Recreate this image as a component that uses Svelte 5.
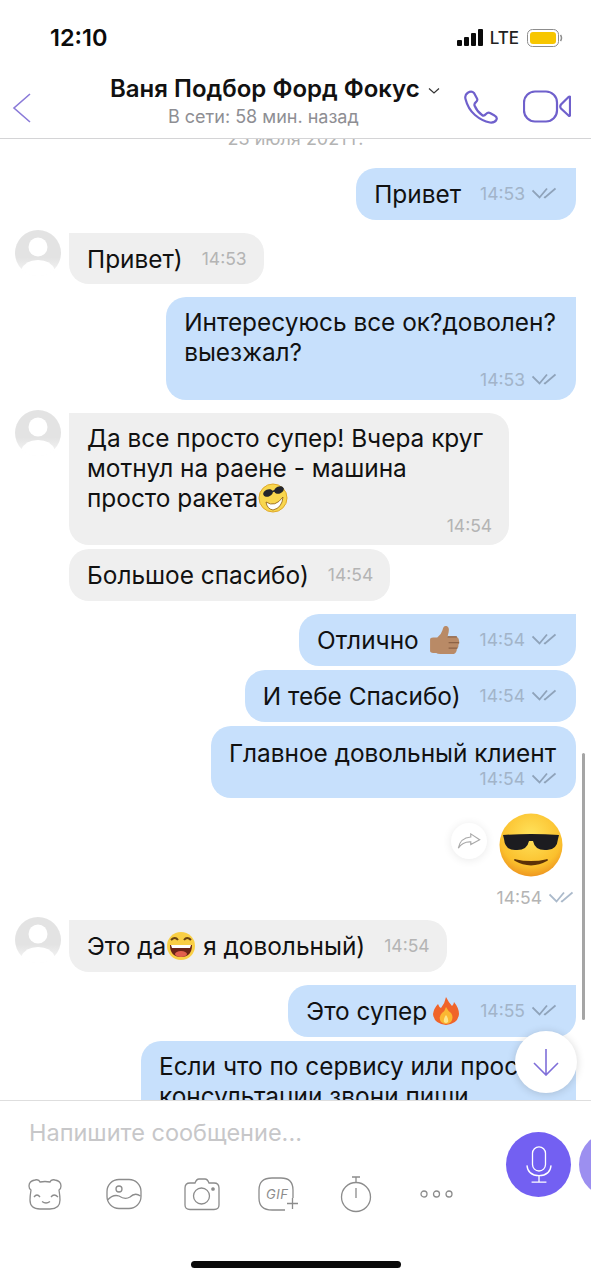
<script>
  const messages = [
    { side: "out", lines: ["Привет"], time: "14:53", corner: true },
    { side: "in", lines: ["Привет)"], time: "14:53", avatar: true, short: true },
    { side: "out", lines: ["Интересуюсь все ок?доволен?", "выезжал?"], time: "14:53", corner: true },
    { side: "in", lines: ["Да все просто супер! Вчера круг", "мотнул на раене - машина", "просто ракета"], time: "14:54", avatar: true, emoji: "cool", roomy: true },
    { side: "in", lines: ["Большое спасибо)"], time: "14:54", tight: true },
    { side: "out", lines: ["Отлично "], time: "14:54", corner: true, emoji: "thumb" },
    { side: "out", lines: ["И тебе Спасибо)"], time: "14:54", tight: true },
    { side: "out", lines: ["Главное довольный клиент"], time: "14:54", tight: true, stacked: true },
    { side: "sticker", time: "14:54" },
    { side: "in", lines: ["Это да"], after: " я довольный)", time: "14:54", avatar: true, emoji: "laugh" },
    { side: "out", lines: ["Это супер"], time: "14:55", corner: true, emoji: "fire" },
  ];
</script>

{#snippet checks()}
  <svg class="checks" viewBox="0 0 24 14" fill="none" stroke="#8fa3ba" stroke-width="1.800">
    <path d="M.5 3.500 L7.500 10.500 L15 1.500" />
    <path d="M12 10 L13 10.500 L23.500 1.500" />
  </svg>
{/snippet}

{#snippet emojiIcon(name)}
  {#if name === "cool"}
    <svg class="emoji" viewBox="0 0 30 30">
      <circle cx="15" cy="15" r="14" fill="#f8d64e" stroke="#e0a92a" />
      <path d="M8 19 Q17 25 25 14 Q24 25 15 27 Q9 26 8 19Z" fill="#fff" stroke="#8a5a10" stroke-width=".8" />
      <ellipse cx="10" cy="10" rx="5" ry="3.600" transform="rotate(-22 10 10)" fill="#23252c" />
      <ellipse cx="21" cy="7" rx="5" ry="3.600" transform="rotate(-22 21 7)" fill="#23252c" />
      <path d="M13 9 L19 7" stroke="#23252c" stroke-width="1.600" />
    </svg>
  {:else if name === "thumb"}
    <svg class="emoji thumb" viewBox="0 0 32 32">
      <path d="M2 15 Q2 13 5 13 H9 Q13 10 14 6 Q15 1 18 2 Q21 3 20 8 L19 12 H27 Q30 13 30 16 Q31 18 29.500 20 Q30 23 28 24 Q28 28 25 29 H12 Q9 29 8 28 H5 Q2 28 2 26Z" fill="#b98a66" />
      <path d="M19 12.500 H28 M20 18 H30 M20 23.500 H28.500" stroke="#8d6245" stroke-width="1.200" fill="none" />
    </svg>
  {:else if name === "laugh"}
    <svg class="emoji" viewBox="0 0 30 30">
      <circle cx="15" cy="15" r="14" fill="#f9cf45" />
      <path d="M5 9 Q9 5 12 9 M18 9 Q21 5 25 9" stroke="#6a4210" stroke-width="2" fill="none" />
      <path d="M4 14 H26 Q26 26 15 26 Q4 26 4 14Z" fill="#6b2417" />
      <path d="M5 14 H25 L24 17 H6Z" fill="#fff" />
      <ellipse cx="15" cy="23" rx="6" ry="3" fill="#e2604d" />
    </svg>
  {:else if name === "fire"}
    <svg class="emoji fire" viewBox="0 0 30 30">
      <path d="M15 1 Q18 7 21 10 Q23 8 23 6 Q28 12 28 18 Q27 28 15 29 Q3 28 2 18 Q3 12 7 8 Q8 11 10 12 Q14 7 15 1Z" fill="#f0642a" />
      <path d="M15 11 Q17 15 20 17 Q23 21 20 26 Q15 30 10 26 Q7 21 11 17 Q14 15 15 11Z" fill="#fbb732" />
      <path d="M15 19 Q18 23 17 26 Q15 28 13 26 Q12 23 15 19Z" fill="#fde58a" />
    </svg>
  {/if}
{/snippet}

<div class="phone">
  <header class="topbar">
    <div class="status">
      <span class="clock">12:10</span>
      <div class="status-right">
        <svg class="signal" viewBox="0 0 26 17" fill="#0b0b0b">
          <rect x="0" y="11" width="5" height="6" rx="1" />
          <rect x="7" y="8" width="5" height="9" rx="1" />
          <rect x="14" y="4" width="5" height="13" rx="1" />
          <rect x="21" y="0" width="5" height="17" rx="1" />
        </svg>
        <span class="lte">LTE</span>
        <svg class="battery" viewBox="0 0 36 18">
          <rect x=".5" y=".5" width="31" height="17" rx="5" fill="none" stroke="#8d8d8d" />
          <rect x="3" y="3" width="26" height="12" rx="3" fill="#f7c600" />
          <path d="M33.500 6 Q35.500 9 33.500 12" fill="none" stroke="#8d8d8d" stroke-width="1.500" />
        </svg>
      </div>
    </div>
    <div class="nav">
      <svg class="back" viewBox="0 0 20 32" fill="none" stroke="#8a7ad8" stroke-width="1.600">
        <path d="M18 2 L2 16 L18 30" />
      </svg>
      <div class="title">
        <div class="name">Ваня Подбор Форд Фокус
          <svg class="caret" viewBox="0 0 12 8" fill="none" stroke="#333" stroke-width="1.200"><path d="M1 1.500 L6 6 L11 1.500" /></svg>
        </div>
        <div class="seen">В сети: 58 мин. назад</div>
      </div>
      <svg class="call" viewBox="0 0 34 36" fill="none" stroke="#6f60cc" stroke-width="2.200">
        <path d="M3.500 4 Q.5 6 1.500 10 Q4 20 11 26 Q18 32 26 33.500 Q31 34 32.500 30.500 Q33.500 28 30.500 26.500 L26 24 Q24 23 22 25 Q20 27.500 18 26 Q13 22.500 10.500 16.500 Q10 14.500 12 13 Q14 11.500 13 9.500 L10 4 Q7.500 1.500 3.500 4Z" />
      </svg>
      <svg class="video" viewBox="0 0 48 36" fill="none" stroke="#6f60cc" stroke-width="2.200">
        <rect x="1" y="2.500" width="33" height="30" rx="11" />
        <path d="M47 8 Q47 7 45.500 8 L38 15.500 Q36.500 17.500 38 19.500 L45.500 26.500 Q47 27.500 47 26Z" />
      </svg>
    </div>
  </header>

  <main class="chat">
    <div class="date">23 июля 2021 г.</div>
    {#each messages as m}
      {#if m.side === "sticker"}
        <div class="sticker-row">
          <div class="forward">
            <svg viewBox="0 0 26 18" fill="none" stroke="#a9a9a9" stroke-width="1.300">
              <path d="M15 1 L25 7.500 L15 13 V10 Q6 9.500 1 17 Q3 5.500 15 4.500Z" />
            </svg>
          </div>
          <svg class="sticker" viewBox="0 0 64 64">
            <defs>
              <radialGradient id="face" cx="50%" cy="35%" r="70%">
                <stop offset="0" stop-color="#ffe35c" />
                <stop offset=".7" stop-color="#fbc02d" />
                <stop offset="1" stop-color="#ea8a1c" />
              </radialGradient>
            </defs>
            <circle cx="32" cy="32" r="31.500" fill="url(#face)" />
            <path d="M4 22 Q32 20 60 22 L59 26 Q58 37 48 37 Q36 38 34 28 H30 Q28 38 16 37 Q6 37 5 26Z" fill="#1c1c20" />
            <path d="M16 47 Q32 56 48 47 Q32 51 16 47Z" fill="#5d3208" stroke="#5d3208" stroke-width="1.800" stroke-linejoin="round" />
          </svg>
        </div>
        <div class="sticker-meta"><span>{m.time}</span>{@render checks()}</div>
      {:else}
        <div class="row {m.side}" class:tight={m.tight} class:spaced={m.side === "in" && !m.avatar}>
          {#if m.avatar}
            <svg class="avatar" viewBox="0 0 46 46">
              <defs>
                <linearGradient id="fade-{m.time}" x1="0" y1="0" x2="0" y2="1">
                  <stop offset=".6" stop-color="#e3e3e3" />
                  <stop offset="1" stop-color="#f8f8f8" />
                </linearGradient>
              </defs>
              <rect width="46" height="46" rx="23" fill="url(#fade-{m.time})" />
              <circle cx="23" cy="17" r="9.500" fill="#fff" />
              <path d="M6 40 Q10 30 23 30 Q36 30 40 40 Q32 46 23 46 Q14 46 6 40Z" fill="#fff" />
            </svg>
          {/if}
          <div class="bubble" class:corner={m.corner} class:square={m.avatar} class:multi={m.lines.length > 1} class:stacked={m.stacked} class:roomy={m.roomy} class:short={m.short}>
            <div class="text">
              {#each m.lines as line, i}
                <div class="line">{line}{#if m.emoji && i === m.lines.length - 1}{@render emojiIcon(m.emoji)}{/if}{#if m.after}{m.after}{/if}</div>
              {/each}
            </div>
            <div class="meta">
              <span>{m.time}</span>
              {#if m.side === "out"}{@render checks()}{/if}
            </div>
          </div>
        </div>
      {/if}
    {/each}
    <div class="row out tight">
      <div class="bubble tail-cut">
        <div class="text">
          <div class="line">Если что по сервису или просто</div>
          <div class="line">консультации звони пиши</div>
        </div>
      </div>
    </div>

    <div class="scrollbar"></div>
    <button class="down" aria-label="Вниз">
      <svg viewBox="0 0 28 28" fill="none" stroke="#7f6fd9" stroke-width="1.600">
        <path d="M14 1 V27 M2 15 L14 27 L26 15" />
      </svg>
    </button>
  </main>

  <footer class="composer">
    <div class="compose-left">
      <div class="placeholder">Напишите сообщение...</div>
      <div class="tools">
        <svg class="tool" viewBox="0 0 36 36">
          <path d="M8 4 Q12 3 13 6 Q18 5 23 6 Q24 3 28 4 Q34 5 34 10 Q34 13 32 14 Q33 20 33 24 Q33 33 23 33 H13 Q3 33 3 24 Q3 20 4 14 Q2 13 2 10 Q2 5 8 4Z" />
          <path d="M7 21 Q10 17 13 21 M24 21 Q27 17 31 21 M15 25.500 Q19 28.500 23 25.500" />
        </svg>
        <svg class="tool" viewBox="0 0 36 36">
          <rect x="1" y="3.500" width="34" height="29" rx="12" />
          <circle cx="13" cy="13" r="3" />
          <path d="M1.500 24 Q7 18 13 20 Q19 24 24 21 Q29 16 34.500 20" />
        </svg>
        <svg class="tool" viewBox="0 0 36 36">
          <path d="M6 7 H11 Q12.500 3 15 3 H21 Q23.500 3 25 7 H30 Q35 7 35 12 V29 Q35 33.500 30 33.500 H6 Q1 33.500 1 29 V12 Q1 7 6 7Z" />
          <circle cx="17.500" cy="20" r="8" />
          <circle cx="29" cy="13" r="1.200" fill="#8c8c8c" />
        </svg>
        <div class="gif">
          <svg class="tool" viewBox="0 0 40 36">
            <path d="M27 34 H14 Q1 34 1 22 V14 Q1 2 14 2 H23 Q35 2 35 14 V22" />
            <path d="M34.500 22 V33 M29 27.500 H40" />
          </svg>
          <span>GIF</span>
        </div>
        <svg class="tool timer" viewBox="0 0 34 40">
          <circle cx="17" cy="23" r="14.500" />
          <path d="M13 3 H21 M17 3 V8.500 M17 14 V24" />
        </svg>
        <svg class="tool dots" viewBox="0 0 33 10">
          <circle cx="4" cy="5" r="3" />
          <circle cx="16.500" cy="5" r="3" />
          <circle cx="29" cy="5" r="3" />
        </svg>
      </div>
    </div>
    <div class="send">
      <button class="mic" aria-label="Голосовое">
        <svg viewBox="0 0 28 40" fill="none" stroke="#fff" stroke-width="1.400">
          <rect x="7" y="1" width="14" height="26" rx="7" />
          <path d="M1 21 Q2 32 14 32 Q26 32 27 21 M14 32 V39 M6 39 H22" />
        </svg>
      </button>
      <div class="mic-next"></div>
    </div>
  </footer>
  <div class="home"><span></span></div>
</div>

<style>
  :global(body) {
    margin: 0;
    background: #fff;
  }

  .phone {
    width: 591px;
    height: 1280px;
    overflow: hidden;
    display: flex;
    flex-direction: column;
    background: #fff;
    font-family: Inter, "Liberation Sans", sans-serif;
    color: #111;
  }

  .topbar {
    height: 139px;
    flex: none;
    box-sizing: border-box;
    border-bottom: 1px solid #d4d4d6;
    background: #fff;
    position: relative;
    z-index: 2;
  }

  .status {
    height: 75px;
    display: flex;
    align-items: center;
    justify-content: space-between;
    padding: 0 28px 0 50px;
  }

  .clock {
    font-size: 23.500px;
    font-weight: 600;
    color: #0b0b0b;
  }

  .status-right {
    display: flex;
    align-items: center;
  }

  .signal {
    width: 26px;
    height: 17px;
  }

  .lte {
    margin: 0 8px 0 7px;
    font-size: 17px;
    font-weight: 500;
    color: #222;
  }

  .battery {
    width: 36px;
    height: 18px;
  }

  .nav {
    display: flex;
    align-items: center;
    height: 58px;
    padding-left: 12px;
  }

  .back {
    width: 20px;
    height: 32px;
    flex: none;
    margin-top: 8px;
  }

  .title {
    width: 344px;
    flex: none;
    margin-left: 78px;
    margin-top: -4px;
  }

  .name {
    font-size: 24px;
    font-weight: 600;
    display: flex;
    align-items: center;
    white-space: nowrap;
    line-height: 30px;
    color: #111;
  }

  .caret {
    width: 12px;
    height: 8px;
    margin-left: 8px;
    margin-top: 3px;
  }

  .seen {
    font-size: 18px;
    color: #8e8e93;
    margin-left: 58px;
    line-height: 26px;
  }

  .call {
    width: 34px;
    height: 36px;
    flex: none;
    margin-left: 10px;
    margin-top: 6px;
  }

  .video {
    width: 48px;
    height: 36px;
    flex: none;
    margin-left: 25px;
    margin-top: 6px;
  }

  .chat {
    flex: none;
    height: 961px;
    overflow: hidden;
    position: relative;
    box-sizing: border-box;
  }

  .date {
    text-align: center;
    font-size: 18px;
    line-height: 22px;
    color: #b3b3b3;
    margin-top: -11px;
    margin-bottom: 18px;
  }

  .row {
    display: flex;
    margin-top: 13px;
  }

  .row.tight {
    margin-top: 4px;
  }

  .row.out {
    justify-content: flex-end;
    padding-right: 15px;
  }

  .row.in {
    padding-left: 15px;
    gap: 8px;
    align-items: flex-start;
  }

  .row.spaced {
    padding-left: 69px;
  }

  .avatar {
    width: 46px;
    height: 46px;
    margin-top: -3px;
    flex: none;
  }

  .bubble {
    display: flex;
    align-items: center;
    gap: 19px;
    box-sizing: border-box;
    min-height: 52px;
    padding: 9px 20px 9px 18px;
    border-radius: 20px;
    font-size: 24.400px;
    line-height: 30px;
  }

  .bubble.short {
    min-height: 51px;
  }

  .out .bubble {
    background: #c7e0fc;
  }

  .in .bubble {
    background: #efefef;
    padding-right: 17px;
  }

  .in .bubble.roomy {
    padding-right: 26px;
    padding-bottom: 8px;
  }

  .roomy .meta {
    margin-right: -9px;
  }

  .out .bubble.corner {
    border-top-right-radius: 0;
  }

  .in .bubble.square {
    border-top-left-radius: 0;
  }

  .bubble.multi,
  .bubble.stacked {
    display: block;
  }

  .bubble.multi {
    padding-top: 10px;
  }

  .bubble.multi .meta,
  .bubble.stacked .meta {
    justify-content: flex-end;
    margin-top: 2px;
    line-height: 22px;
  }

  .bubble.stacked {
    padding-top: 12px;
    padding-bottom: 8px;
  }

  .bubble.stacked .meta {
    margin-top: 0;
  }

  .bubble.tail-cut {
    height: 90px;
    border-top-right-radius: 20px;
    padding-top: 10px;
    white-space: nowrap;
    width: 435px;
    overflow: hidden;
    align-items: flex-start;
  }

  .line {
    white-space: pre;
    display: flex;
    align-items: center;
  }

  .emoji {
    width: 30px;
    height: 30px;
    flex: none;
  }

  .emoji.thumb {
    width: 33px;
    height: 33px;
    margin-left: 2px;
  }

  .emoji.fire {
    margin-left: 4px;
  }

  .meta {
    display: flex;
    align-items: center;
    gap: 7px;
    font-size: 17.500px;
    color: #b4b4b4;
    white-space: nowrap;
  }

  .out .meta {
    color: #a2b4c9;
  }

  .checks {
    width: 24px;
    height: 14px;
    flex: none;
  }

  .sticker-row {
    display: flex;
    justify-content: flex-end;
    align-items: center;
    gap: 12px;
    padding-right: 28px;
    margin-top: 15px;
  }

  .forward {
    width: 36px;
    height: 36px;
    border-radius: 50%;
    background: #fff;
    box-shadow: 0 1px 10px rgba(0, 0, 0, 0.09);
    display: flex;
    align-items: center;
    justify-content: center;
    margin-top: -8px;
  }

  .forward svg {
    width: 24px;
    height: 16px;
  }

  .sticker {
    width: 64px;
    height: 64px;
  }

  .sticker-meta {
    display: flex;
    justify-content: flex-end;
    align-items: center;
    gap: 7px;
    padding-right: 18px;
    margin-top: 10px;
    margin-bottom: 11px;
    font-size: 17.500px;
    line-height: 22px;
    color: #b4b4b4;
  }

  .sticker-meta + .row {
    margin-top: 0;
  }

  .sticker-meta .checks {
    opacity: 0.75;
  }

  .scrollbar {
    position: absolute;
    right: 6px;
    top: 614px;
    width: 3px;
    height: 267px;
    border-radius: 2px;
    background: #a5a5a5;
  }

  .down {
    position: absolute;
    left: 515px;
    top: 892px;
    width: 62px;
    height: 62px;
    border: 0;
    padding: 0;
    border-radius: 50%;
    background: #fff;
    box-shadow: 0 1px 8px rgba(0, 0, 0, 0.16);
    display: flex;
    align-items: center;
    justify-content: center;
  }

  .down svg {
    width: 28px;
    height: 28px;
  }

  .composer {
    flex: none;
    height: 150px;
    box-sizing: border-box;
    border-top: 1px solid #dedede;
    display: flex;
    background: #fff;
    position: relative;
    z-index: 2;
  }

  .compose-left {
    width: 506px;
    flex: none;
    padding-left: 29px;
    box-sizing: border-box;
  }

  .placeholder {
    font-size: 23.500px;
    line-height: 28px;
    margin-top: 18px;
    color: #c7c7c9;
    white-space: nowrap;
  }

  .tools {
    display: flex;
    align-items: center;
    margin-top: 29px;
    margin-left: -2px;
    height: 36px;
  }

  .tool {
    width: 36px;
    height: 36px;
    flex: none;
    fill: none;
    stroke: #8c8c8c;
    stroke-width: 1.300;
  }

  .tools > :nth-child(2) {
    margin-left: 43px;
  }

  .tools > :nth-child(3) {
    margin-left: 42px;
  }

  .gif {
    position: relative;
    width: 40px;
    height: 36px;
    margin-left: 38px;
    flex: none;
  }

  .gif .tool {
    width: 40px;
    height: 36px;
    display: block;
  }

  .gif span {
    position: absolute;
    left: 8px;
    top: 0;
    line-height: 36px;
    font-size: 13px;
    font-style: italic;
    letter-spacing: 0.5px;
    color: #8c8c8c;
  }

  .timer {
    width: 34px;
    height: 40px;
    margin-left: 41px;
  }

  .dots {
    width: 33px;
    height: 10px;
    margin-left: 47px;
  }

  .send {
    display: flex;
    gap: 8px;
    padding-top: 31px;
    align-items: flex-start;
  }

  .mic {
    width: 65px;
    height: 65px;
    padding: 0;
    border: 0;
    border-radius: 50%;
    background: #7360f2;
    display: flex;
    align-items: center;
    justify-content: center;
    flex: none;
  }

  .mic svg {
    width: 26px;
    height: 39px;
  }

  .mic-next {
    width: 65px;
    height: 65px;
    border-radius: 50%;
    background: #9c8ff0;
    flex: none;
  }

  .home {
    flex: none;
    display: flex;
    justify-content: center;
    padding-top: 11px;
  }

  .home span {
    width: 210px;
    height: 7px;
    border-radius: 4px;
    background: #0a0a0a;
  }
</style>
